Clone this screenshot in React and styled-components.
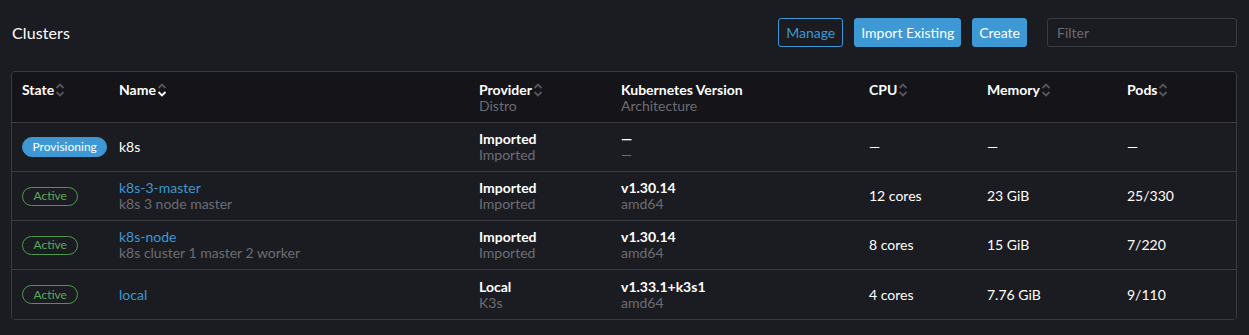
import React from "react";
import styled, { createGlobalStyle } from "styled-components";

const Global = createGlobalStyle`
  html, body { margin: 0; padding: 0; background: #1b1c21; }
  body { font-family: Lato, "Noto Sans", sans-serif; color: #ffffff; }
  * { box-sizing: border-box; }
`;

const Page = styled.div`
  padding: 18px 12px 0 11px;
  min-height: 335px;
  background: #1b1c21;
`;

const TopBar = styled.div`
  display: flex;
  align-items: center;
  height: 29px;
  padding-left: 1px;
`;

const Title = styled.h1`
  margin: 0;
  flex: 1;
  font-size: 16px;
  font-weight: 400;
  color: #ffffff;
  letter-spacing: 0.1px;
`;

const Actions = styled.div`
  display: flex;
  align-items: center;
  gap: 11px;
`;

const Button = styled.button`
  height: 29px;
  padding: 0 ${(p) => (p.$outline ? 7 : 6)}px;
  border-radius: 3px;
  font-family: Lato, sans-serif;
  font-size: 14px;
  border: 1px solid #3d98d3;
  background: ${(p) => (p.$outline ? "transparent" : "#3d98d3")};
  color: ${(p) => (p.$outline ? "#3d98d3" : "#ffffff")};
  cursor: pointer;
`;

const Filter = styled.input`
  margin-left: 20px;
  width: 190px;
  height: 29px;
  border: 1px solid #3b3c43;
  border-radius: 3px;
  background: transparent;
  color: #fff;
  padding: 0 9px;
  font-family: Lato, sans-serif;
  font-size: 14px;
  &::placeholder { color: #6a6b72; }
`;

const Table = styled.div`
  margin-top: 24px;
  border: 1px solid #3b3c42;
  border-radius: 4px;
  overflow: hidden;
`;

const cols = "97px 360px 142px 248px 118px 140px 1fr";

const HeadRow = styled.div`
  display: grid;
  grid-template-columns: ${cols};
  background: #141419;
  border-bottom: 1px solid #3b3c42;
  height: 51px;
`;

const HeadCell = styled.div`
  padding: 10px 10px 0 10px;
  font-size: 14px;
  line-height: 16px;
`;

const HeadLabel = styled.div`
  display: flex;
  align-items: center;
  gap: 1px;
  font-weight: 700;
  color: #ffffff;
`;

const SubLabel = styled.div`
  color: #6c6d73;
  font-weight: 400;
`;

const Row = styled.div`
  display: grid;
  grid-template-columns: ${cols};
  height: 49px;
  background: #1b1c21;
  border-bottom: ${(p) => (p.$last ? "none" : "1px solid #3b3c42")};
`;

const Cell = styled.div`
  display: flex;
  flex-direction: column;
  justify-content: center;
  padding: 0 10px;
  font-size: 14px;
  line-height: 16px;
  color: #ffffff;
  white-space: nowrap;
`;

const Strong = styled.div`
  font-weight: 700;
  color: #ffffff;
`;

const Muted = styled.div`
  color: #6c6d73;
`;

const Link = styled.a`
  color: #3d98d3;
  text-decoration: none;
`;

const Plain = styled.div`
  color: #ffffff;
`;

const Badge = styled.span`
  display: inline-flex;
  align-self: flex-start;
  align-items: center;
  justify-content: center;
  height: ${(p) => (p.$solid ? 20 : 19)}px;
  padding: 0 ${(p) => (p.$solid ? 9.5 : 10.5)}px;
  border-radius: 10px;
  font-size: 12px;
  line-height: 1;
  background: ${(p) => (p.$solid ? "#3d98d3" : "transparent")};
  border: 1px solid ${(p) => (p.$solid ? "#3d98d3" : "#4a9a4c")};
  color: ${(p) => (p.$solid ? "#ffffff" : "#5aa95c")};
`;

const SortIcon = ({ active }) => (
  <svg width="10" height="16" viewBox="0 0 10 16" style={{ display: "block" }}>
    <path d="M1.5 6 L5 2.5 L8.5 6" fill="none" stroke="#55565c" strokeWidth="1.8" />
    <path
      d="M1.5 10 L5 13.5 L8.5 10"
      fill="none"
      stroke={active ? "#ffffff" : "#55565c"}
      strokeWidth="1.8"
    />
  </svg>
);

const headers = [
  { label: "State", sort: true },
  { label: "Name", sort: true, active: true },
  { label: "Provider", sub: "Distro", sort: true },
  { label: "Kubernetes Version", sub: "Architecture" },
  { label: "CPU", sort: true },
  { label: "Memory", sort: true },
  { label: "Pods", sort: true },
];

const rows = [
  {
    state: "Provisioning",
    name: "k8s",
    plainName: true,
    provider: "Imported",
    distro: "Imported",
    version: "—",
    arch: "—",
    cpu: "—",
    mem: "—",
    pods: "—",
  },
  {
    state: "Active",
    name: "k8s-3-master",
    desc: "k8s 3 node master",
    provider: "Imported",
    distro: "Imported",
    version: "v1.30.14",
    arch: "amd64",
    cpu: "12 cores",
    mem: "23 GiB",
    pods: "25/330",
  },
  {
    state: "Active",
    name: "k8s-node",
    desc: "k8s cluster 1 master 2 worker",
    provider: "Imported",
    distro: "Imported",
    version: "v1.30.14",
    arch: "amd64",
    cpu: "8 cores",
    mem: "15 GiB",
    pods: "7/220",
  },
  {
    state: "Active",
    name: "local",
    provider: "Local",
    distro: "K3s",
    version: "v1.33.1+k3s1",
    arch: "amd64",
    cpu: "4 cores",
    mem: "7.76 GiB",
    pods: "9/110",
  },
];

export default function App() {
  return (
    <>
      <Global />
      <Page>
        <TopBar>
          <Title>Clusters</Title>
          <Actions>
            <Button $outline>Manage</Button>
            <Button>Import Existing</Button>
            <Button>Create</Button>
          </Actions>
          <Filter placeholder="Filter" />
        </TopBar>
        <Table>
          <HeadRow>
            {headers.map((h) => (
              <HeadCell key={h.label}>
                <HeadLabel>
                  {h.label}
                  {h.sort && <SortIcon active={h.active} />}
                </HeadLabel>
                {h.sub && <SubLabel>{h.sub}</SubLabel>}
              </HeadCell>
            ))}
          </HeadRow>
          {rows.map((r, i) => (
            <Row key={r.name} $last={i === rows.length - 1}>
              <Cell>
                <Badge $solid={r.state === "Provisioning"}>{r.state}</Badge>
              </Cell>
              <Cell>
                {r.plainName ? <Plain>{r.name}</Plain> : <Link href="#">{r.name}</Link>}
                {r.desc && <Muted>{r.desc}</Muted>}
              </Cell>
              <Cell>
                <Strong>{r.provider}</Strong>
                <Muted>{r.distro}</Muted>
              </Cell>
              <Cell>
                <Strong>{r.version}</Strong>
                <Muted>{r.arch}</Muted>
              </Cell>
              <Cell>{r.cpu}</Cell>
              <Cell>{r.mem}</Cell>
              <Cell>{r.pods}</Cell>
            </Row>
          ))}
        </Table>
      </Page>
    </>
  );
}
